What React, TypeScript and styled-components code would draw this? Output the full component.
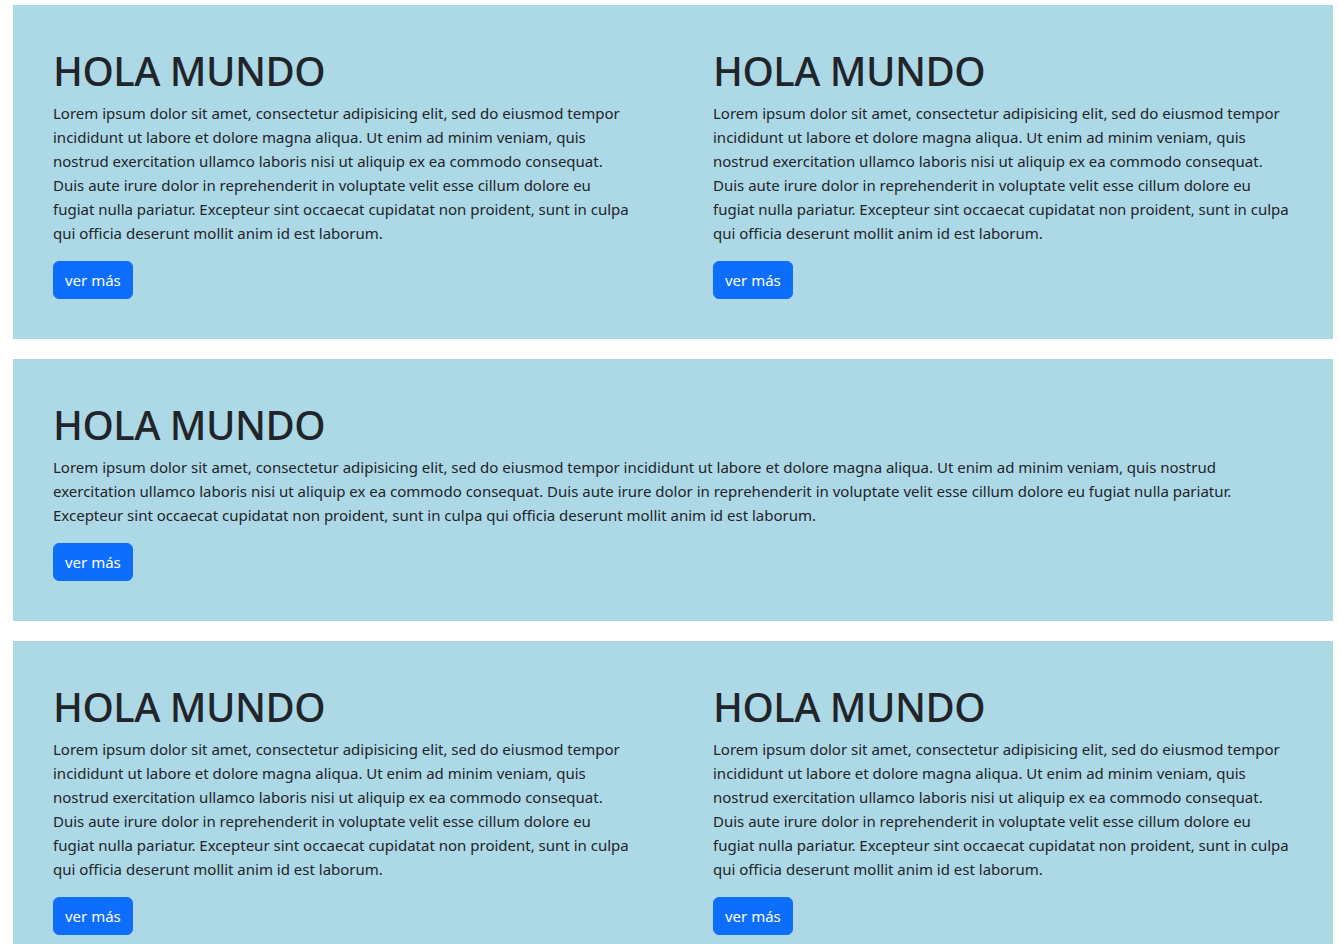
import React from "react";
import styled, { createGlobalStyle } from "styled-components";

const GlobalStyle = createGlobalStyle`
  html, body { margin: 0; padding: 0; background: #ffffff; }
  body {
    font-family: "Noto Sans", "Open Sans", sans-serif;
    color: #212529;
  }
  * { box-sizing: border-box; }
`;

const Page = styled.main`
  display: flex;
  flex-direction: column;
  gap: 20px;
  width: 1320px;
  margin: 5px 0 0 13px;
`;

const Band = styled.section<{ $cols: number }>`
  background: #add8e6;
  padding: 40px;
  display: grid;
  grid-template-columns: repeat(${(p) => p.$cols}, 1fr);
  column-gap: 80px;
`;

const Block = styled.article`
  display: flex;
  flex-direction: column;
  align-items: flex-start;
  min-width: 0;
`;

const Title = styled.h1`
  margin: 0 0 6px;
  padding-top: 2px;
  font-family: "Noto Sans", sans-serif;
  font-size: 40px;
  font-weight: 500;
  line-height: 48px;
  letter-spacing: -0.5px;
  color: #212529;
`;

const Body = styled.p`
  margin: 0 0 16px;
  font-size: 15px;
  line-height: 24px;
  color: #212529;
`;

const MoreButton = styled.button`
  border: 1px solid #0d6efd;
  background: #0d6efd;
  color: #ffffff;
  font-family: "Noto Sans", sans-serif;
  font-size: 15px;
  line-height: 24px;
  padding: 6px 11px;
  border-radius: 6px;
  white-space: nowrap;
  cursor: pointer;
`;

const LOREM =
  "Lorem ipsum dolor sit amet, consectetur adipisicing elit, sed do eiusmod tempor incididunt ut labore et dolore magna aliqua. Ut enim ad minim veniam, quis nostrud exercitation ullamco laboris nisi ut aliquip ex ea commodo consequat. Duis aute irure dolor in reprehenderit in voluptate velit esse cillum dolore eu fugiat nulla pariatur. Excepteur sint occaecat cupidatat non proident, sunt in culpa qui officia deserunt mollit anim id est laborum.";

function Card() {
  return (
    <Block>
      <Title>HOLA MUNDO</Title>
      <Body>{LOREM}</Body>
      <MoreButton type="button">ver más</MoreButton>
    </Block>
  );
}

export default function App() {
  return (
    <>
      <GlobalStyle />
      <Page>
        <Band $cols={2}>
          <Card />
          <Card />
        </Band>
        <Band $cols={1}>
          <Card />
        </Band>
        <Band $cols={2}>
          <Card />
          <Card />
        </Band>
      </Page>
    </>
  );
}
